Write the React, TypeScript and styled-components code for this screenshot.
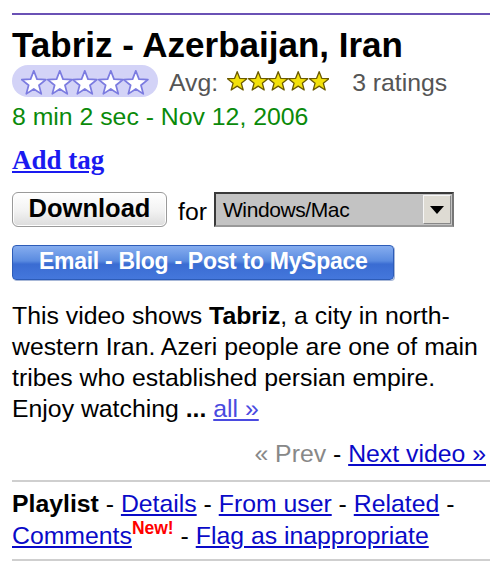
import React from "react";
import styled, { createGlobalStyle } from "styled-components";

const Global = createGlobalStyle`
  html, body { margin: 0; padding: 0; background: #ffffff; }
  body { font-family: "Liberation Sans", Arial, sans-serif; color: #000; }
`;

const Page = styled.div`
  width: 490px;
  padding: 13px 0 0 12px;
  box-sizing: border-box;
  font-family: "Liberation Sans", Arial, sans-serif;
`;

const Rule = styled.div<{ $color: string; $mt?: number }>`
  height: 2px;
  background: ${(p) => p.$color};
  margin-top: ${(p) => p.$mt ?? 0}px;
`;

const Title = styled.h1`
  margin: 10px 0 0;
  font-size: 35px;
  line-height: 40px;
  font-weight: bold;
`;

const RatingRow = styled.div`
  display: flex;
  align-items: center;
  height: 32px;
  margin-bottom: 5px;
`;

const Pill = styled.div`
  width: 146px;
  height: 32px;
  border-radius: 16px;
  background: #d3d3f7;
  display: flex;
  align-items: center;
  justify-content: center;
  box-sizing: border-box;
  padding-top: 3px;
`;

const Gray = styled.span<{ $ml: number }>`
  font-size: 24.8px;
  color: #555;
  margin-left: ${(p) => p.$ml}px;
  line-height: 32px;
  padding-top: 4px;
`;

const StarRow = styled.span<{ $ml?: number }>`
  display: inline-flex;
  margin-left: ${(p) => p.$ml ?? 0}px;
`;

const DateLine = styled.div`
  font-size: 24.8px;
  line-height: 30px;
  color: #0a8a0a;
`;

const AddTag = styled.a`
  display: block;
  margin-top: 13px;
  font-family: "Liberation Serif", "Times New Roman", serif;
  font-weight: bold;
  font-size: 27px;
  line-height: 30px;
  color: #1a1af0;
  text-decoration: underline;
  width: max-content;
`;

const DownloadRow = styled.div`
  display: flex;
  align-items: center;
  margin-top: 17px;
  height: 35px;
`;

const DownloadButton = styled.button`
  width: 155px;
  height: 35px;
  border: 1px solid #9a9a9a;
  border-radius: 6px;
  background: linear-gradient(#ffffff, #f2f2f2 55%, #dcdcdc);
  font-family: "Liberation Sans", Arial, sans-serif;
  font-weight: bold;
  font-size: 25.5px;
  color: #000;
  padding: 0 0 2px;
  box-shadow: inset 0 0 0 1px #fff;
`;

const ForLabel = styled.span`
  font-size: 24.8px;
  margin-left: 11px;
  margin-right: 7px;
  padding-top: 4px;
`;

const Select = styled.div`
  width: 240px;
  height: 35px;
  box-sizing: border-box;
  border: 2px solid #3a3a3a;
  border-right-color: #777;
  border-bottom-color: #999;
  background: #c3c3c3;
  display: flex;
  align-items: center;
  justify-content: space-between;
  padding-left: 7px;
  font-size: 21px;
  letter-spacing: -0.4px;
`;

const ArrowBox = styled.div`
  width: 28px;
  height: 29px;
  margin-right: 1px;
  background: #dedbd3;
  border-left: 1px solid #f6f6f6;
  border-top: 1px solid #f6f6f6;
  border-right: 1px solid #888;
  border-bottom: 1px solid #888;
  box-sizing: border-box;
  display: flex;
  align-items: center;
  justify-content: center;
`;

const ShareButton = styled.button`
  display: block;
  margin-top: 18px;
  width: 382px;
  height: 35px;
  border: 1px solid #2d5cb8;
  border-radius: 4px;
  background: linear-gradient(#86adef, #5a8be0 45%, #3a6cd2 55%, #4477dc);
  color: #fff;
  font-family: "Liberation Sans", Arial, sans-serif;
  font-weight: bold;
  font-size: 23px;
  letter-spacing: -0.3px;
  padding: 0 0 2px 26px;
  text-align: left;
  box-shadow: 1px 1px 0 #a8b8d8;
`;

const Description = styled.p`
  margin: 20px 0 0;
  width: 476px;
  font-size: 24.8px;
  line-height: 31px;
`;

const SoftLink = styled.a`
  color: #4a4ae0;
  text-decoration: underline;
`;

const Pager = styled.div`
  margin-top: 14px;
  text-align: right;
  padding-right: 4px;
  font-size: 24.8px;
  line-height: 31px;
  color: #000;
`;

const Muted = styled.span`
  color: #888;
`;

const Link = styled.a`
  color: #0a0ac8;
  text-decoration: underline;
`;

const Links = styled.div`
  margin-top: 6px;
  width: 474px;
  font-size: 24.8px;
  line-height: 32px;
`;

const NewBadge = styled.sup`
  color: #f00;
  font-weight: bold;
  font-size: 17.5px;
  vertical-align: 10px;
  line-height: 0;
`;

const STAR = "12,1 14.76,8.2 22.46,8.6 16.47,13.45 18.47,20.9 12,16.7 5.53,20.9 7.53,13.45 1.54,8.6 9.24,8.2";

const Star = ({ w, fill, stroke, sw }: { w: number; fill: string; stroke: string; sw: number }) => (
  <svg width={w} height={w * 0.96} viewBox="1 0.3 22 21.2">
    <polygon points={STAR} fill={fill} stroke={stroke} strokeWidth={sw} strokeLinejoin="round" />
  </svg>
);

const Stars = ({ w, fill, stroke, sw, ml }: { w: number; fill: string; stroke: string; sw: number; ml?: number }) => (
  <StarRow $ml={ml}>
    {[0, 1, 2, 3, 4].map((i) => (
      <Star key={i} w={w} fill={fill} stroke={stroke} sw={sw} />
    ))}
  </StarRow>
);

export default function App() {
  return (
    <Page>
      <Global />
      <Rule $color="#6a51b5" />
      <Title>Tabriz - Azerbaijan, Iran</Title>
      <RatingRow>
        <Pill>
          <Stars w={25.6} fill="#ffffff" stroke="#7b7be0" sw={1.5} />
        </Pill>
        <Gray $ml={11}>Avg:</Gray>
        <Stars w={20.4} fill="#f3e10a" stroke="#6b5a00" sw={1.4} ml={9} />
        <Gray $ml={23}>3 ratings</Gray>
      </RatingRow>
      <DateLine>8 min 2 sec - Nov 12, 2006</DateLine>
      <AddTag href="#">Add tag</AddTag>
      <DownloadRow>
        <DownloadButton>Download</DownloadButton>
        <ForLabel>for</ForLabel>
        <Select>
          <span>Windows/Mac</span>
          <ArrowBox>
            <svg width="14" height="8" viewBox="0 0 14 8">
              <polygon points="0,0 14,0 7,8" fill="#000" />
            </svg>
          </ArrowBox>
        </Select>
      </DownloadRow>
      <ShareButton>Email - Blog - Post to MySpace</ShareButton>
      <Description>
        This video shows <b>Tabriz</b>, a city in north-western Iran. Azeri people are one of main tribes who
        established persian empire. Enjoy watching <b>...</b> <SoftLink href="#">all »</SoftLink>
      </Description>
      <Pager>
        <Muted>« Prev</Muted> - <Link href="#">Next video »</Link>
      </Pager>
      <Rule $color="#cfcfcf" $mt={11} />
      <Links>
        <b>Playlist</b> - <Link href="#">Details</Link> - <Link href="#">From user</Link> -{" "}
        <Link href="#">Related</Link> - <Link href="#">Comments</Link>
        <NewBadge>New!</NewBadge> - <Link href="#">Flag as inappropriate</Link>
      </Links>
      <Rule $color="#cfcfcf" $mt={7} />
    </Page>
  );
}
